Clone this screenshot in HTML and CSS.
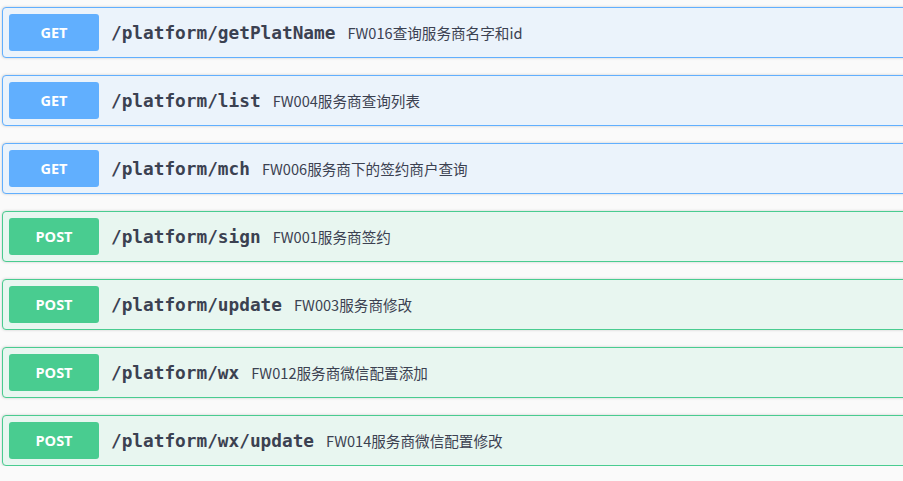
FILE: index.html
```html
<!DOCTYPE html>
<html>
<head>
<meta charset="utf-8">
<link rel="stylesheet" href="styles.css">
</head>
<body>
<div class="ops">
  <div class="op get"><span class="method">GET</span><span class="path">/platform/getPlatName</span><span class="desc">FW016查询服务商名字和id</span></div>
  <div class="op get"><span class="method">GET</span><span class="path">/platform/list</span><span class="desc">FW004服务商查询列表</span></div>
  <div class="op get"><span class="method">GET</span><span class="path">/platform/mch</span><span class="desc">FW006服务商下的签约商户查询</span></div>
  <div class="op post"><span class="method">POST</span><span class="path">/platform/sign</span><span class="desc">FW001服务商签约</span></div>
  <div class="op post"><span class="method">POST</span><span class="path">/platform/update</span><span class="desc">FW003服务商修改</span></div>
  <div class="op post"><span class="method">POST</span><span class="path">/platform/wx</span><span class="desc">FW012服务商微信配置添加</span></div>
  <div class="op post"><span class="method">POST</span><span class="path">/platform/wx/update</span><span class="desc">FW014服务商微信配置修改</span></div>
</div>
</body>
</html>
```
FILE: styles.css
```css
html, body {
  margin: 0;
  padding: 0;
  background: #fafafa;
  overflow: hidden;
}
.ops {
  width: 920px;
  padding: 7px 0 0 2px;
  display: flex;
  flex-direction: column;
  gap: 17px;
}
.op {
  box-sizing: border-box;
  height: 51px;
  border: 1px solid;
  border-radius: 4px;
  box-shadow: 0 0 3px rgba(0,0,0,0.19);
  display: flex;
  align-items: center;
  padding: 0 6px;
}
.op.get { background: #ebf3fb; border-color: #61affe; }
.op.post { background: #e8f6f0; border-color: #49cc90; }
.method {
  width: 90px;
  height: 37px;
  border-radius: 3px;
  color: #fff;
  font-family: "Open Sans", sans-serif;
  font-weight: 700;
  font-size: 14.5px;
  display: flex;
  align-items: center;
  justify-content: center;
  flex: none;
}
.get .method { background: #61affe; }
.post .method { background: #49cc90; }
.path {
  margin-left: 12px;
  font-family: "DejaVu Sans Mono", monospace;
  font-weight: 700;
  font-size: 17.75px;
  color: #3b4151;
}
.desc {
  margin-left: 12px;
  font-family: "Noto Sans CJK SC", "Microsoft YaHei", sans-serif;
  font-size: 14.6px;
  color: #3b4151;
}
```
